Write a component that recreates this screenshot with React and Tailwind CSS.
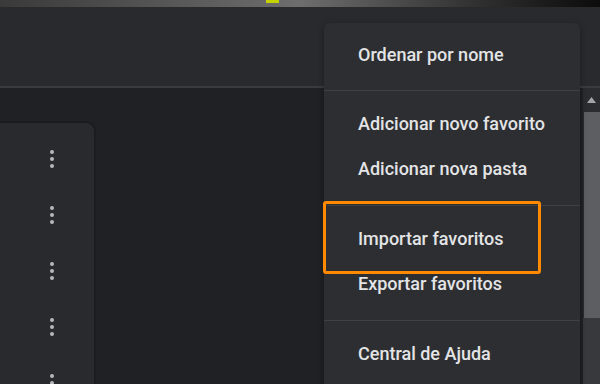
import React from "react";

const groups = [
  ["Ordenar por nome"],
  ["Adicionar novo favorito", "Adicionar nova pasta"],
  ["Importar favoritos", "Exportar favoritos"],
  ["Central de Ajuda"],
];

function Dots() {
  return (
    <div className="flex flex-col items-center gap-[3px]">
      <span className="w-[4px] h-[4px] rounded-full bg-[#b5b7ba]" />
      <span className="w-[4px] h-[4px] rounded-full bg-[#b5b7ba]" />
      <span className="w-[4px] h-[4px] rounded-full bg-[#b5b7ba]" />
    </div>
  );
}

export default function App() {
  return (
    <div
      className="relative w-[600px] h-[384px] overflow-hidden bg-[#202124] flex flex-col"
      style={{ fontFamily: "Roboto, 'Liberation Sans', sans-serif" }}
    >
      {/* cropped strip of the window above */}
      <div className="relative h-[7px] shrink-0 bg-gradient-to-r from-[#3a3a3a] via-[#6e6e6e] to-[#0c0c0c]">
        <span className="absolute left-[266px] top-0 w-[13px] h-[3px] bg-[#c5d300]" />
      </div>

      {/* toolbar */}
      <div className="h-[81px] shrink-0 bg-[#292a2d] border-b-2 border-[#3a3b3e]" />

      {/* content */}
      <div className="flex flex-1 min-h-0">
        <div className="flex-1 pt-[33px]">
          <div className="w-[96px] h-full bg-[#292a2d] rounded-tr-[10px] border-t-2 border-r-2 border-[#1b1c1e] flex flex-col items-end pr-[40px] pt-[27px] gap-[38px]">
            <Dots />
            <Dots />
            <Dots />
            <Dots />
            <Dots />
          </div>
        </div>

        {/* scrollbar */}
        <div className="w-[17px] flex flex-col bg-[#2b2c2f]">
          <div className="h-[24px] flex items-center justify-center">
            <svg width="9" height="6" viewBox="0 0 9 6">
              <path d="M4.5 0 L9 6 L0 6 Z" fill="#a3a4a6" />
            </svg>
          </div>
          <div className="h-[206px] ml-[1px] bg-[#5d5e61]" />
          <div className="flex-1 bg-[#38393c]" />
        </div>
      </div>

      {/* dropdown menu */}
      <div className="absolute left-[324px] top-[23px] w-[256px] h-[380px] bg-[#2d2e31] rounded-[6px] shadow-[0_2px_6px_rgba(0,0,0,0.35)] text-[#e3e4e6] text-[18px] font-medium">
        {groups.map((items, gi) => (
          <div
            key={gi}
            className={
              (gi === 0 ? "pt-[9px] pb-[13px] " : "pt-[10px] pb-[14px] ") +
              (gi < groups.length - 1 ? "border-b border-[#3f4043]" : "")
            }
          >
            {items.map((label) => (
              <div key={label} className="h-[45px] flex items-center pl-[34px]">
                {label}
              </div>
            ))}
          </div>
        ))}
      </div>

      {/* highlight box */}
      <div className="absolute left-[323px] top-[201px] w-[218px] h-[73px] border-[3px] border-[#ff8a00] rounded-[3px]" />
    </div>
  );
}
